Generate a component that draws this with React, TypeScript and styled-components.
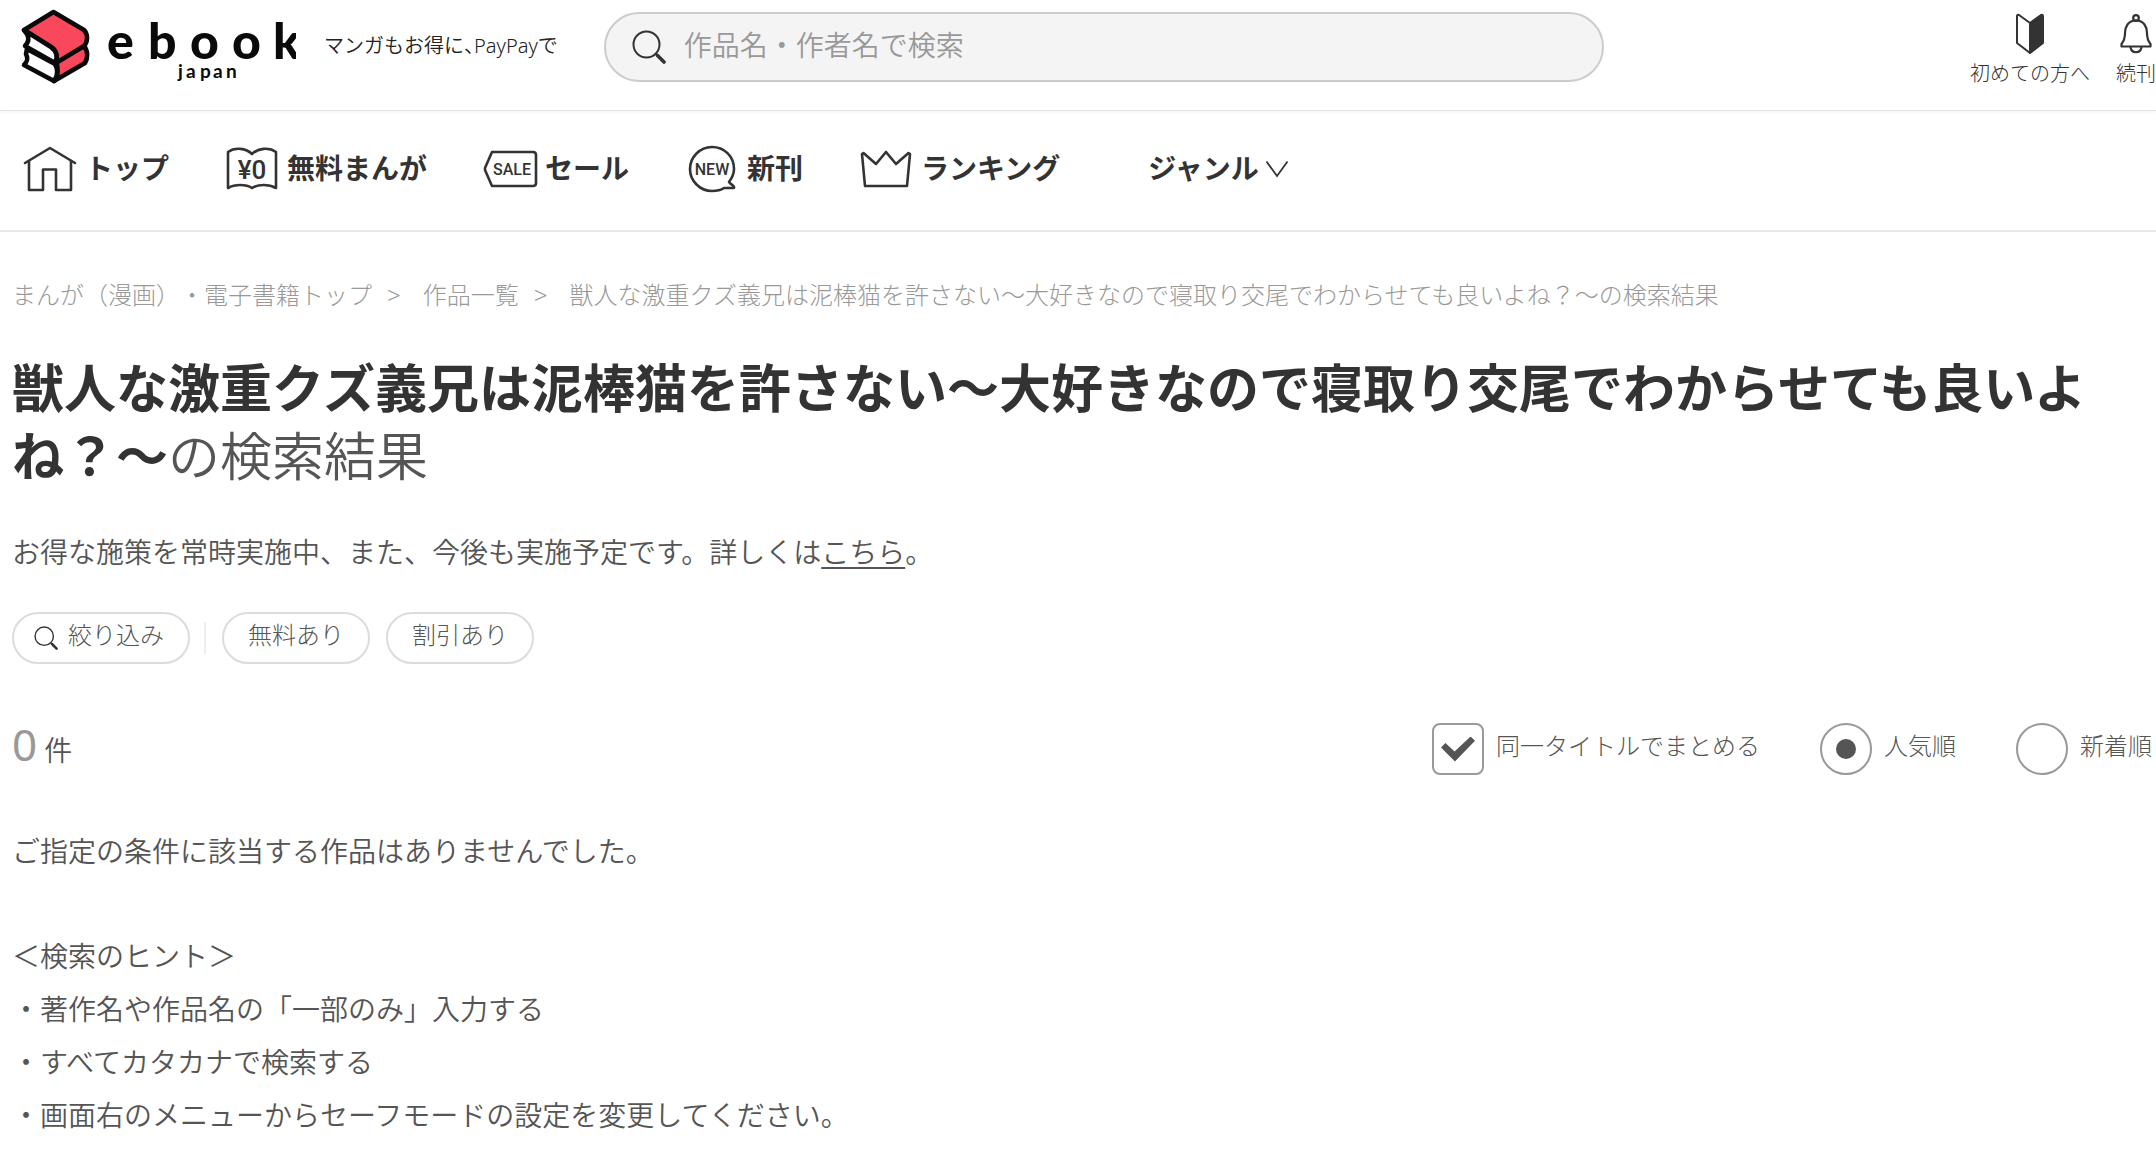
import React from "react";
import styled, { createGlobalStyle, css } from "styled-components";

const GlobalStyle = createGlobalStyle`
  *, *::before, *::after { box-sizing: border-box; }
  body {
    margin: 0;
    background: #fff;
    color: #555;
    font-family: "Noto Sans", "Noto Sans CJK JP", sans-serif;
    font-weight: 300;
    text-spacing-trim: space-all;
    overflow-x: hidden;
  }
  a { color: inherit; text-decoration: none; }
  button, input { font: inherit; color: inherit; }
  h1, p, ul, ol { margin: 0; padding: 0; }
  ul, ol { list-style: none; }
`;

const Header = styled.header`
  display: flex;
  height: 111px;
  padding: 0 0 0 20px;
  border-bottom: 1px solid #e4e4e4;
  box-shadow: 0 1px 4px rgba(0, 0, 0, 0.06);
`;

const LogoLink = styled.a`
  flex: none;
  padding-top: 9px;
  svg { display: block; }
`;

const Tagline = styled.p`
  flex: none;
  margin-left: 28px;
  padding-top: 31px;
  font-size: 20px;
  font-weight: 350;
  line-height: 30px;
  color: #222;
  white-space: nowrap;
`;

const TightMark = styled.span`
  font-feature-settings: "halt";
`;

const SearchForm = styled.form`
  flex: 0 1 1000px;
  display: flex;
  align-items: center;
  gap: 18px;
  height: 70px;
  margin: 12px 0 0 46px;
  padding: 0 26px;
  border: 2px solid #ccc;
  border-radius: 35px;
  background: #f4f4f4;
  svg { flex: none; }
`;

const SearchInput = styled.input`
  flex: 1;
  min-width: 0;
  height: 60px;
  padding: 0 0 4px;
  border: 0;
  outline: 0;
  background: transparent;
  font-size: 28px;
  font-weight: 350;
  &::placeholder { color: #999; opacity: 1; }
`;

const Shortcuts = styled.nav`
  flex: none;
  display: flex;
  gap: 26px;
  margin-left: auto;
`;

const Shortcut = styled.a`
  display: flex;
  flex-direction: column;
  align-items: center;
  gap: 4px;
  padding-top: 13px;
  font-size: 20px;
  line-height: 30px;
  color: #333;
  svg { display: block; }
`;

const GlobalNav = styled.nav`
  display: flex;
  align-items: center;
  gap: 56px;
  height: 121px;
  padding: 0 24px 4px 23px;
  border-bottom: 2px solid #e8e8e8;
`;

const navItem = css`
  display: flex;
  align-items: center;
  gap: 6px;
  font-size: 28px;
  line-height: 40px;
  font-weight: 700;
  color: #333;
  white-space: nowrap;
  svg { display: block; flex: none; }
`;

const NavLink = styled.a`
  ${navItem}
`;

const NavLabel = styled.span`
  padding-bottom: 2px;
`;

const NavButton = styled.button`
  ${navItem}
  margin-left: 32px;
  padding: 0;
  border: 0;
  background: none;
  cursor: pointer;
`;

const Main = styled.main`
  padding: 45px 4px 0 12px;
`;

const Crumbs = styled.ol`
  display: flex;
  flex-wrap: wrap;
  font-size: 24px;
  line-height: 36px;
  color: #999;
`;

const Crumb = styled.li`
  & + &::before {
    content: ">";
    margin: 0 22px 0 15px;
  }
`;

const Title = styled.h1`
  margin-top: 41px;
  padding-right: 36px;
  font-size: 52px;
  line-height: 68px;
  font-weight: 700;
  color: #333;
`;

const TitleSuffix = styled.span`
  font-weight: 350;
  color: #555;
`;

const Notice = styled.p`
  margin-top: 42px;
  font-size: 28px;
  font-weight: 350;
  line-height: 40px;
  a { text-decoration: underline; text-decoration-thickness: 2px; text-underline-offset: 4px; }
`;

const Filters = styled.div`
  display: flex;
  align-items: center;
  gap: 16px;
  margin-top: 40px;
`;

const Chip = styled.button`
  display: flex;
  align-items: center;
  gap: 10px;
  height: 52px;
  padding: 0 24px 6px;
  border: 2px solid #dcdcdc;
  border-radius: 26px;
  background: #fff;
  font-size: 24px;
  line-height: 36px;
  cursor: pointer;
  svg { display: block; margin-top: 6px; }
`;

const SearchChip = styled(Chip)`
  padding-left: 20px;
`;

const Divider = styled.span`
  width: 2px;
  height: 32px;
  margin-left: -2px;
  background: #eee;
`;

const ResultBar = styled.div`
  display: flex;
  flex-wrap: wrap;
  align-items: center;
  justify-content: space-between;
  margin-top: 54px;
`;

const Count = styled.p`
  font-size: 28px;
  font-weight: 350;
  line-height: 52px;
  padding-bottom: 4px;
`;

const CountNumber = styled.span`
  margin-right: 7px;
  font-size: 44px;
  font-weight: 400;
  color: #999;
`;

const SortOptions = styled.div`
  display: flex;
  flex-wrap: wrap;
  gap: 60px;
`;

const Option = styled.label`
  display: flex;
  align-items: center;
  gap: 12px;
  font-size: 24px;
  line-height: 36px;
  white-space: nowrap;
  cursor: pointer;
`;

const OptionText = styled.span`
  padding-bottom: 6px;
`;

const OptionInput = styled.input`
  appearance: none;
  display: grid;
  place-items: center;
  width: 52px;
  height: 52px;
  margin: 0;
  border: 2px solid #999;
  border-radius: ${(p) => (p.type === "radio" ? "50%" : "8px")};
  background: #fff;
  &:checked::before {
    content: "";
    background: #555;
    ${(p) =>
      p.type === "radio"
        ? css`
            width: 20px;
            height: 20px;
            border-radius: 50%;
          `
        : css`
            width: 34px;
            height: 25px;
            clip-path: polygon(0 44%, 13% 26%, 40% 60%, 87% 0, 100% 17%, 41% 100%);
          `}
  }
`;

const EmptyMessage = styled.div`
  margin-top: 45px;
  font-size: 28px;
  font-weight: 350;
  line-height: 53px;
  p + p { margin-top: 52px; }
`;

const LOGO_FONT = "Lato, sans-serif";
const BADGE_FONT = "Roboto, sans-serif";

const Logo = () => (
  <svg width="276" height="76" viewBox="20 9 276 76" role="img" aria-label="ebook japan">
    <g stroke="#0a0a0a" strokeWidth="4.6" strokeLinejoin="round" strokeLinecap="round">
      <path d="M56 62 L84 46 C88 51 88 58 85 63 L54 81 C58 76 59 68 56 62Z" fill="#f9485c" />
      <path d="M27 49 L55 64 C58 69 58 76 54 81 L24 65 C28 61 28 58 26 54Z" fill="#fff" />
      <path d="M53.500 12 L24 30 L51 47 C56 50 58 56 56 63 L84 46 C88 42 88 34 84 30Z" fill="#f9485c" />
      <path d="M24 30 L51 47 C57 51 58 58 55 63 L25 46 C29 42 29 38 27 34Z" fill="#fff" />
    </g>
    <g fontFamily={LOGO_FONT} fill="#0a0a0a">
      <text x="107 148 190 232 273" y="59" fontSize="50" fontWeight="900">ebook</text>
      <text x="178 186 200 213 226" y="78" fontSize="19" fontWeight="700">japan</text>
    </g>
  </svg>
);

const SearchIcon = ({ size }: { size: number }) => (
  <svg width={size} height={size} viewBox="0 0 34 34" fill="none" stroke="#333" strokeLinecap="round" aria-hidden="true">
    <circle cx="14.500" cy="14.500" r="13" strokeWidth="2" />
    <path d="M24 24 L25 25" strokeWidth="2" />
    <path d="M25.500 25.500 L32 32" strokeWidth="3.600" />
  </svg>
);

const BeginnerIcon = () => (
  <svg width="30" height="42" viewBox="0 0 30 42" stroke="#333" strokeWidth="2" strokeLinejoin="round" aria-hidden="true">
    <path d="M15 10 L4 2 C3 1.500 2 2 2 3 V30 L15 40Z" fill="#fff" />
    <path d="M15 10 L26 2 C27 1.500 28 2 28 3 V30 L15 40Z" fill="#333" />
  </svg>
);

const BellIcon = () => (
  <svg width="34" height="42" viewBox="0 0 34 42" fill="none" stroke="#333" strokeWidth="2.200" strokeLinejoin="round" aria-hidden="true">
    <circle cx="17" cy="5" r="2.800" />
    <path d="M17 7.500 C9 7.500 6 14 6 20 C6 26 5 28 2.500 31 V33.500 H31.500 V31 C29 28 28 26 28 20 C28 14 25 7.500 17 7.500Z" />
    <path d="M11.500 34 C12.500 41 21.500 41 22.500 34" />
  </svg>
);

const NavIcon = ({ children }: { children: React.ReactNode }) => (
  <svg width="56" height="48" viewBox="0 0 56 48" fill="none" stroke="#333" strokeWidth="2.600" strokeLinejoin="round" strokeLinecap="round" aria-hidden="true">
    {children}
  </svg>
);

const IconWord = ({ x, y, size, children }: { x: number; y: number; size: number; children: string }) => (
  <text x={x} y={y} fontSize={size} textAnchor="middle" fontFamily={BADGE_FONT} fontWeight="500" fill="#333" stroke="none">
    {children}
  </text>
);

const HomeIcon = () => (
  <NavIcon>
    <path d="M2 18 L27 3 L52 18" />
    <path d="M6 16 V45 H20 V24.500 H33 V45 H48 V16" />
  </NavIcon>
);

const FreeIcon = () => (
  <NavIcon>
    <path d="M27 9 C21 3 10 2 3 7 V43 C10 39 21 39 27 43 C33 39 44 39 51 43 V7 C44 2 33 3 27 9Z" />
    <IconWord x={27} y={34} size={26}>¥0</IconWord>
  </NavIcon>
);

const SaleIcon = () => (
  <NavIcon>
    <path d="M9 7 H50 Q53 7 53 10 V38 Q53 41 50 41 H9 L2 25 V23Z" />
    <IconWord x={29} y={30} size={16}>SALE</IconWord>
  </NavIcon>
);

const NewIcon = () => (
  <NavIcon>
    <path d="M44 37 C47 33 49 29 49 24 C49 11 39 2 27 2 C15 2 5 12 5 24 C5 36 15 46 27 46 C31 46 36 45 39 43 H49 C50 41 45 39 44 37Z" />
    <IconWord x={27} y={30} size={16}>NEW</IconWord>
  </NavIcon>
);

const CrownIcon = () => (
  <NavIcon>
    <path d="M6 41 L3 9 L4.500 8 L17 19 L27 7 L37 19 L49.500 8 L51 9 L48 41Z" />
  </NavIcon>
);

const ChevronIcon = () => (
  <svg width="24" height="20" viewBox="0 0 24 20" fill="none" stroke="#333" strokeWidth="1.800" aria-hidden="true">
    <path d="M1.500 2.500 L12 17 L22.500 2.500" />
  </svg>
);

const NAV_ITEMS = [
  { label: "トップ", icon: <HomeIcon /> },
  { label: "無料まんが", icon: <FreeIcon /> },
  { label: "セール", icon: <SaleIcon /> },
  { label: "新刊", icon: <NewIcon /> },
  { label: "ランキング", icon: <CrownIcon /> },
];

const QUERY = "獣人な激重クズ義兄は泥棒猫を許さない～大好きなので寝取り交尾でわからせても良いよね？～";

const HINTS = [
  "・著作名や作品名の「一部のみ」入力する",
  "・すべてカタカナで検索する",
  "・画面右のメニューからセーフモードの設定を変更してください。",
];

export default function App() {
  return (
    <>
      <GlobalStyle />
      <Header>
        <LogoLink href="#"><Logo /></LogoLink>
        <Tagline>
          マンガもお得に<TightMark>、</TightMark>PayPayで
        </Tagline>
        <SearchForm role="search" onSubmit={(e) => e.preventDefault()}>
          <SearchIcon size={34} />
          <SearchInput type="text" aria-label="作品名・作者名で検索" placeholder="作品名・作者名で検索" />
        </SearchForm>
        <Shortcuts>
          <Shortcut href="#"><BeginnerIcon />初めての方へ</Shortcut>
          <Shortcut href="#"><BellIcon />続刊</Shortcut>
        </Shortcuts>
      </Header>

      <GlobalNav>
        {NAV_ITEMS.map((item) => (
          <NavLink href="#" key={item.label}>
            {item.icon}
            <NavLabel>{item.label}</NavLabel>
          </NavLink>
        ))}
        <NavButton type="button">
          <NavLabel>ジャンル</NavLabel>
          <ChevronIcon />
        </NavButton>
      </GlobalNav>

      <Main>
        <Crumbs>
          <Crumb><a href="#">まんが（漫画）・電子書籍トップ</a></Crumb>
          <Crumb><a href="#">作品一覧</a></Crumb>
          <Crumb>{QUERY}の検索結果</Crumb>
        </Crumbs>

        <Title>
          {QUERY}<TitleSuffix>の検索結果</TitleSuffix>
        </Title>

        <Notice>
          お得な施策を常時実施中、また、今後も実施予定です。詳しくは<a href="#">こちら</a>。
        </Notice>

        <Filters>
          <SearchChip type="button"><SearchIcon size={24} />絞り込み</SearchChip>
          <Divider />
          <Chip type="button">無料あり</Chip>
          <Chip type="button">割引あり</Chip>
        </Filters>

        <ResultBar>
          <Count><CountNumber>0</CountNumber>件</Count>
          <SortOptions>
            <Option>
              <OptionInput type="checkbox" defaultChecked />
              <OptionText>同一タイトルでまとめる</OptionText>
            </Option>
            <Option>
              <OptionInput type="radio" name="sort" defaultChecked />
              <OptionText>人気順</OptionText>
            </Option>
            <Option>
              <OptionInput type="radio" name="sort" />
              <OptionText>新着順</OptionText>
            </Option>
          </SortOptions>
        </ResultBar>

        <EmptyMessage>
          <p>ご指定の条件に該当する作品はありませんでした。</p>
          <p>＜検索のヒント＞</p>
          <ul>
            {HINTS.map((hint) => <li key={hint}>{hint}</li>)}
          </ul>
        </EmptyMessage>
      </Main>
    </>
  );
}
